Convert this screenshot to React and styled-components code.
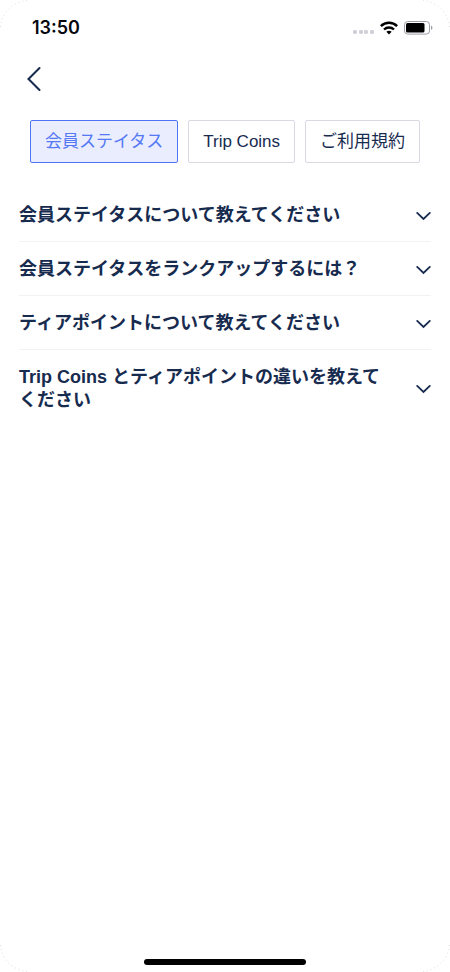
import React, { useState } from "react";
import styled, { createGlobalStyle } from "styled-components";

const navy = "#172b4f";
const sans = `"Liberation Sans", "Noto Sans CJK JP", sans-serif`;

const GlobalStyle = createGlobalStyle`
  *, *::before, *::after { box-sizing: border-box; }
  body { margin: 0; background: #fff; font-family: ${sans}; color: ${navy}; }
  button { font: inherit; color: inherit; cursor: pointer; }
`;

const Screen = styled.div`
  position: relative;
  display: flex;
  flex-direction: column;
  min-height: 100vh;
  background: #fff;
`;

const StatusBar = styled.header`
  display: flex;
  align-items: center;
  justify-content: space-between;
  height: 56px;
  padding: 0 17px 0 32px;
`;

const Time = styled.time`
  font: 600 18px/24px Inter, sans-serif;
  color: #05070f;
`;

const StatusIcons = styled.div`
  display: flex;
  align-items: center;
  gap: 6px;
`;

const NavBar = styled.nav`
  display: flex;
  padding: 8px 20px;
`;

const BackButton = styled.button`
  display: flex;
  align-items: center;
  justify-content: center;
  width: 28px;
  height: 30px;
  padding: 0;
  border: 0;
  background: none;
`;

const Tabs = styled.div`
  display: flex;
  justify-content: center;
  gap: 10px;
  padding: 18px 16px 25px;
`;

const Tab = styled.button`
  height: 43px;
  padding: 0 14px;
  border: 1px solid ${(p) => (p.$active ? "#4c74f4" : "#d8d9e3")};
  border-radius: 2px;
  background: ${(p) => (p.$active ? "#e9edfd" : "#fff")};
  color: ${(p) => (p.$active ? "#5578f5" : navy)};
  font-size: 17px;
  font-weight: 400;
  line-height: 24px;
  white-space: nowrap;
`;

const QuestionList = styled.ul`
  flex: 1;
  margin: 0;
  padding: 0 19px;
  list-style: none;
`;

const QuestionItem = styled.li`
  & + & {
    border-top: 1px solid #f1f2f4;
  }
`;

const QuestionButton = styled.button`
  display: flex;
  align-items: center;
  justify-content: space-between;
  gap: 30px;
  width: 100%;
  padding: 16px 0 14px;
  border: 0;
  background: none;
  font-size: 18px;
  font-weight: 700;
  line-height: 23px;
  text-align: left;
`;

const HomeArea = styled.footer`
  display: flex;
  justify-content: center;
  padding-bottom: 7px;
`;

const HomeBar = styled.div`
  width: 36%;
  height: 6px;
  border-radius: 3px;
  background: #000;
`;

const CornerArc = styled.svg`
  position: absolute;
  ${(p) => p.$v}: 0;
  ${(p) => p.$h}: 0;
  transform: scale(${(p) => (p.$h === "left" ? 1 : -1)}, ${(p) => (p.$v === "top" ? 1 : -1)});
  pointer-events: none;
`;

function Corner({ v, h }) {
  return (
    <CornerArc $v={v} $h={h} width="28" height="28" fill="none" aria-hidden="true">
      <path d="M.5 27C1 14 12 2 27 .5" stroke="#dedede" strokeWidth="1" strokeDasharray="1 3" />
    </CornerArc>
  );
}

function SignalDots() {
  return (
    <svg width="21" height="14" fill="#cfd0d8" aria-hidden="true">
      {[0, 6, 11, 17].map((x) => (
        <rect key={x} x={x} y="9" width="4" height="4" rx="1.4" />
      ))}
    </svg>
  );
}

function WifiIcon() {
  return (
    <svg width="18" height="14" viewBox="0 0 18 14" fill="none" stroke="#000" aria-hidden="true">
      <path d="M.9 5.1C5.4.7 12.6.7 17.1 5.1" strokeWidth="2.5" />
      <path d="M4 8.5c2.8-2.7 7.2-2.7 10 0" strokeWidth="2.4" />
      <path d="M6.4 10.8c1.4-1.3 3.8-1.3 5.2 0L9 13.5z" fill="#000" stroke="none" />
    </svg>
  );
}

function BatteryIcon() {
  return (
    <svg width="29" height="14" viewBox="0 0 29 14" aria-hidden="true">
      <rect x=".5" y=".5" width="25" height="12.6" rx="3.2" fill="#fff" stroke="#9c9ea6" />
      <rect x="2" y="2" width="18.5" height="9.6" rx="1.5" fill="#000" />
      <path d="M27 4.6c2 .8 2 3.6 0 4.4z" fill="#9c9ea6" />
    </svg>
  );
}

const Chevron = styled.svg`
  flex: none;
`;

function ChevronDown() {
  return (
    <Chevron width="16" height="16" viewBox="0 0 16 16" fill="none" aria-hidden="true">
      <path d="M2.2 4.9 8.5 11l6.3-6.1" stroke={navy} strokeWidth="1.8" strokeLinecap="round" />
    </Chevron>
  );
}

const tabs = ["会員ステイタス", "Trip Coins", "ご利用規約"];
const questions = [
  "会員ステイタスについて教えてください",
  "会員ステイタスをランクアップするには？",
  "ティアポイントについて教えてください",
  "Trip Coins とティアポイントの違いを教えてください",
];

export default function App() {
  const [active, setActive] = useState(0);
  return (
    <Screen lang="ja">
      <GlobalStyle />
      <StatusBar>
        <Time>13:50</Time>
        <StatusIcons>
          <SignalDots />
          <WifiIcon />
          <BatteryIcon />
        </StatusIcons>
      </StatusBar>
      <NavBar>
        <BackButton type="button" aria-label="戻る">
          <svg width="14" height="26" viewBox="0 0 14 26" fill="none" aria-hidden="true">
            <path d="M12.5 2 1.5 13l11 11" stroke={navy} strokeWidth="2.1" strokeLinecap="round" />
          </svg>
        </BackButton>
      </NavBar>
      <Tabs role="tablist">
        {tabs.map((label, i) => (
          <Tab
            key={label}
            type="button"
            role="tab"
            aria-selected={i === active}
            $active={i === active}
            onClick={() => setActive(i)}
          >
            {label}
          </Tab>
        ))}
      </Tabs>
      <QuestionList>
        {questions.map((text) => (
          <QuestionItem key={text}>
            <QuestionButton type="button" aria-expanded="false">
              {text}
              <ChevronDown />
            </QuestionButton>
          </QuestionItem>
        ))}
      </QuestionList>
      <HomeArea>
        <HomeBar />
      </HomeArea>
      <Corner v="top" h="left" />
      <Corner v="top" h="right" />
      <Corner v="bottom" h="left" />
      <Corner v="bottom" h="right" />
    </Screen>
  );
}
